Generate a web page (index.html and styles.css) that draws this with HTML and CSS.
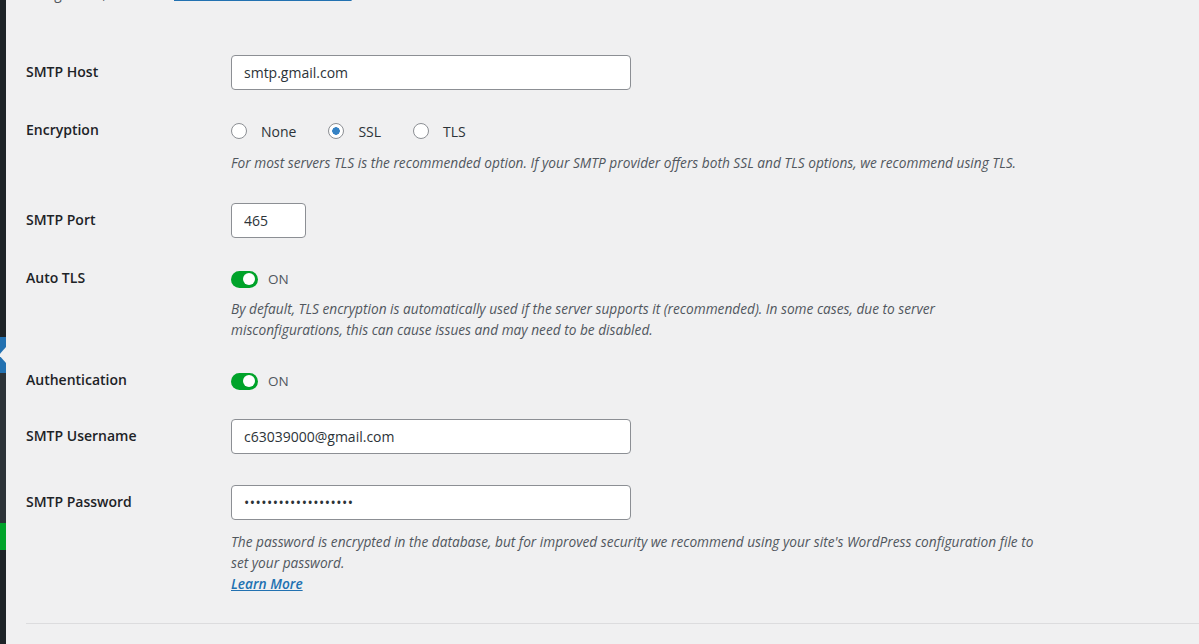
FILE: index.html
```html
<!DOCTYPE html>
<html lang="en">
<head>
<meta charset="utf-8">
<title>SMTP Settings</title>
<link rel="stylesheet" href="styles.css">
</head>
<body>
<div class="admin">
  <div class="sidebar">
    <div class="sb-top"></div>
    <div class="sb-current"><span class="sb-arrow"></span></div>
    <div class="sb-sub"></div>
    <div class="sb-green"></div>
    <div class="sb-bottom"></div>
  </div>
  <main class="content">
    <p class="prev"><span class="prev-text">Using Gmail, see</span><a href="#" class="prev-link">Gmail SMTP documentation</a></p>

    <div class="settings">
      <div class="row">
        <div class="label label--input">SMTP Host</div>
        <div class="field">
          <input class="text-input" type="text" value="smtp.gmail.com">
        </div>
      </div>

      <div class="row">
        <div class="label label--line">Encryption</div>
        <div class="field">
          <div class="radios">
            <label class="radio"><input type="radio" name="enc"><span>None</span></label>
            <label class="radio"><input type="radio" name="enc" checked><span>SSL</span></label>
            <label class="radio"><input type="radio" name="enc"><span>TLS</span></label>
          </div>
          <p class="desc">For most servers TLS is the recommended option. If your SMTP provider offers both SSL and TLS options, we recommend using TLS.</p>
        </div>
      </div>

      <div class="row">
        <div class="label label--input">SMTP Port</div>
        <div class="field">
          <input class="text-input text-input--small" type="text" value="465">
        </div>
      </div>

      <div class="row">
        <div class="label label--line">Auto TLS</div>
        <div class="field">
          <div class="toggle-line">
            <span class="toggle"><span class="knob"></span></span>
            <span class="toggle-text">ON</span>
          </div>
          <p class="desc desc--tls">By default, TLS encryption is automatically used if the server supports it (recommended). In some cases, due to server misconfigurations, this can cause issues and may need to be disabled.</p>
        </div>
      </div>

      <div class="row row--tight">
        <div class="label label--line">Authentication</div>
        <div class="field">
          <div class="toggle-line">
            <span class="toggle"><span class="knob"></span></span>
            <span class="toggle-text">ON</span>
          </div>
        </div>
      </div>

      <div class="row">
        <div class="label label--input">SMTP Username</div>
        <div class="field">
          <input class="text-input" type="text" value="c63039000@gmail.com">
        </div>
      </div>

      <div class="row row--last">
        <div class="label label--input">SMTP Password</div>
        <div class="field">
          <input class="text-input text-input--pw" type="password" value="aaaaaaaaaaaaaaaaaaa">
          <p class="desc desc--pw">The password is encrypted in the database, but for improved security we recommend using your site's WordPress configuration file to set your password.<br><a href="#" class="learn">Learn More</a></p>
        </div>
      </div>
    </div>
    <div class="separator"></div>
  </main>
</div>
</body>
</html>
```
FILE: styles.css
```css
* { box-sizing: border-box; }

html, body {
  margin: 0;
  padding: 0;
  height: 100%;
  overflow: hidden;
}

body {
  background: #f0f0f1;
  font-family: "Open Sans", "Noto Sans", Arial, sans-serif;
  color: #1d2327;
  font-size: 13px;
}

.admin {
  display: flex;
  min-height: 644px;
}

.sidebar {
  width: 6px;
  flex: none;
  display: flex;
  flex-direction: column;
  background: #1d2327;
}

.sb-top { height: 337px; background: #1d2327; }
.sb-current {
  height: 36px;
  background: #2271b1;
  display: flex;
  align-items: center;
  justify-content: flex-end;
}
.sb-arrow {
  width: 0;
  height: 0;
  border-top: 8px solid transparent;
  border-bottom: 8px solid transparent;
  border-right: 7px solid #f0f0f1;
}
.sb-sub { height: 150px; background: #2c3338; }
.sb-green { height: 27px; background: #00a32a; }
.sb-bottom { flex: 1; background: #1d2327; }

.content {
  flex: 1;
  padding-left: 20px;
}

.prev {
  margin: -17px 0 0;
  height: 21px;
  line-height: 21px;
  color: #50575e;
  font-size: 13.7px;
  white-space: nowrap;
}
.prev-text {
  display: inline-block;
  width: 148px;
}
.prev-link {
  color: #2271b1;
}

.settings {
  margin-top: 36px;
}

.row {
  display: flex;
  align-items: flex-start;
  padding: 15px 0;
}
.row--tight { padding-bottom: 12px; }
.row--last { padding-top: 16px; padding-bottom: 29px; }

.label {
  width: 205px;
  flex: none;
  font-size: 14px;
  font-weight: 600;
  color: #1d2327;
}
.label--input { line-height: 34px; }
.label--line { line-height: 20px; }

.field { flex: 1; min-width: 0; }

.text-input {
  display: block;
  width: 400px;
  height: 35px;
  border: 1px solid #8c8f94;
  border-radius: 4px;
  background: #fff;
  padding: 0 12px;
  font-family: inherit;
  font-size: 14px;
  color: #2c3338;
  outline: none;
}
.text-input--small { width: 75px; }
.text-input--pw { letter-spacing: 0.5px; }

.radios {
  display: flex;
  align-items: center;
  height: 22px;
  gap: 32px;
}
.radio {
  display: flex;
  align-items: center;
  gap: 14px;
  font-size: 14px;
  color: #2c3338;
}
.radio input {
  appearance: none;
  -webkit-appearance: none;
  margin: 0;
  width: 16px;
  height: 16px;
  border: 1px solid #8c8f94;
  border-radius: 50%;
  background: #fff;
}
.radio input:checked {
  background: radial-gradient(circle, #3582c4 0 3.5px, #fff 4px);
}

.desc {
  margin: 10px 0 0;
  max-width: 810px;
  font-size: 13.7px;
  font-style: italic;
  line-height: 21px;
  color: #50575e;
}
.desc--tls { margin-top: 8px; }
.desc--pw { margin-top: 11px; }

.learn {
  color: #2271b1;
  font-weight: 600;
  text-decoration: underline;
}

.toggle-line {
  display: flex;
  align-items: center;
  height: 22px;
  gap: 10px;
}
.toggle {
  display: inline-flex;
  align-items: center;
  justify-content: flex-end;
  width: 27px;
  height: 17px;
  padding: 0 3px;
  border-radius: 9px;
  background: #00a32a;
}
.knob {
  width: 12px;
  height: 12px;
  border-radius: 50%;
  background: #fff;
}
.toggle-text {
  font-size: 13.5px;
  color: #50575e;
}

.separator {
  border-top: 1px solid #dcdcde;
}
```
